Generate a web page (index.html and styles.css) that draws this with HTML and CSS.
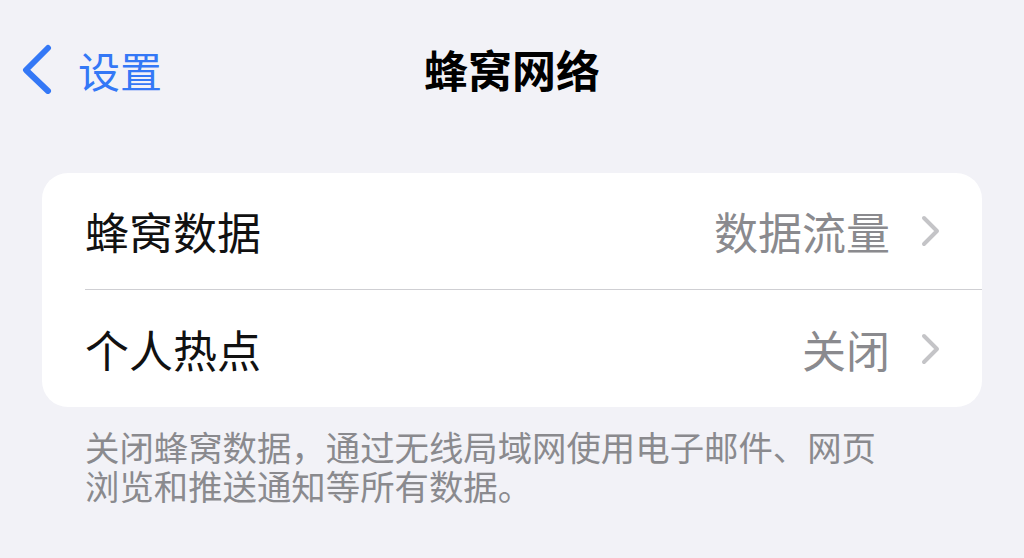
FILE: index.html
```html
<!DOCTYPE html>
<html lang="zh-CN">
  <head>
    <meta charset="UTF-8" />
    <meta name="viewport" content="width=device-width, initial-scale=1.0" />
    <title>蜂窝网络</title>
    <link rel="stylesheet" href="styles.css">
  </head>
  <body>
    <div class="nav">
      <div class="back">
        <svg class="back-icon" width="36" height="50" viewBox="0 0 36 50">
          <path d="M28 4 L6 26 L28 47" fill="none" stroke="#3478f6" stroke-width="6" stroke-linecap="round" stroke-linejoin="round" />
        </svg>
        <span>设置</span>
      </div>
      <div class="title">蜂窝网络</div>
      <div></div>
    </div>

    <div class="card">
      <div class="row">
        <div class="row-inner">
          <span class="label">蜂窝数据</span>
          <span class="value">数据流量</span>
          <svg class="chevron" width="20" height="32" viewBox="0 0 20 32">
            <path d="M4 3 L17 16 L4 29" fill="none" stroke="#c4c4c7" stroke-width="4" stroke-linecap="round" stroke-linejoin="round" />
          </svg>
        </div>
      </div>
      <div class="row">
        <div class="row-inner">
          <span class="label">个人热点</span>
          <span class="value">关闭</span>
          <svg class="chevron" width="20" height="32" viewBox="0 0 20 32">
            <path d="M4 3 L17 16 L4 29" fill="none" stroke="#c4c4c7" stroke-width="4" stroke-linecap="round" stroke-linejoin="round" />
          </svg>
        </div>
      </div>
    </div>

    <p class="footer">关闭蜂窝数据，通过无线局域网使用电子邮件、网页浏览和推送通知等所有数据。</p>
  </body>
</html>
```

FILE: styles.css
```css
body {
  margin: 0;
  background-color: #f2f2f7;
  font-family: "Noto Sans CJK SC", "Noto Sans", sans-serif;
  color: #111;
}

.nav {
  display: grid;
  grid-template-columns: 1fr auto 1fr;
  align-items: center;
  height: 138px;
  padding-left: 20px;
  padding-right: 20px;

  .back {
    display: flex;
    align-items: center;
    gap: 22px;
    color: #3478f6;
    font-size: 42px;
  }
  .title {
    font-size: 44px;
    font-weight: 700;
    color: #000;
  }
}

.card {
  margin: 35px 42px 0 42px;
  background-color: #fff;
  border-radius: 26px;
  overflow: hidden;

  .row {
    padding-left: 43px;
  }
  .row-inner {
    display: flex;
    align-items: center;
    height: 116px;
    padding-right: 42px;
    border-bottom: 1px solid #cfcfd3;
  }
  .row:last-child .row-inner {
    border-bottom: none;
    height: 117px;
  }
  .label {
    font-size: 44px;
    flex: 1;
  }
  .value {
    font-size: 44px;
    color: #8a8a8e;
    margin-right: 30px;
  }
}

.footer {
  margin: 20px 0 0 85px;
  width: 800px;
  font-size: 34.4px;
  line-height: 39px;
  color: #8a8a8e;
}
```
